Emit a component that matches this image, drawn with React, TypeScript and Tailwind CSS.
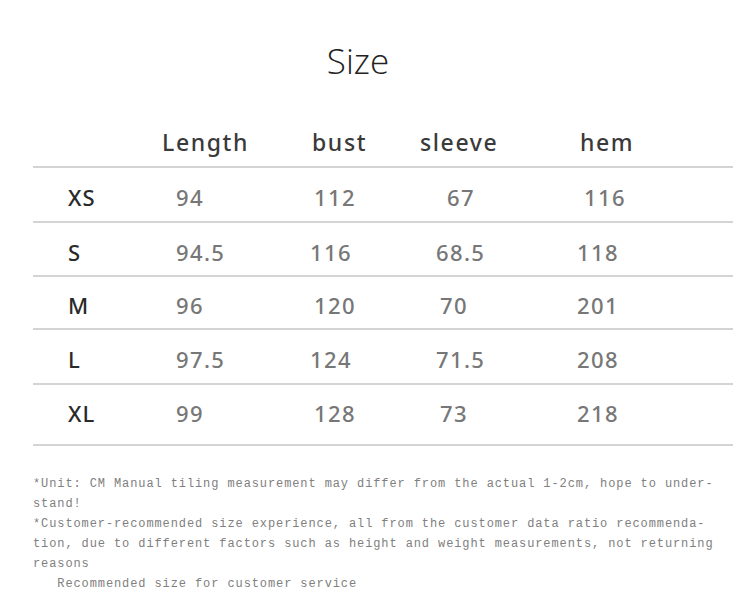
const rows = [
  { size: "XS", cells: [["94", ""], ["112", "pl-[4px]"], ["67", "pl-[11px]"], ["116", "pl-[7px]"]], h: "h-[55px] pt-[6px]" },
  { size: "S", cells: [["94.5", ""], ["116", ""], ["68.5", ""], ["118", ""]], h: "h-[54px] pt-[6px]" },
  { size: "M", cells: [["96", ""], ["120", "pl-[4px]"], ["70", "pl-[4px]"], ["201", "pl-[-1px]"]], h: "h-[53px] pt-[6px]" },
  { size: "L", cells: [["97.5", ""], ["124", ""], ["71.5", ""], ["208", ""]], h: "h-[55px] pt-[6px]" },
  { size: "XL", cells: [["99", ""], ["128", "pl-[4px]"], ["73", "pl-[4px]"], ["218", ""]], h: "h-[61px] pb-[2px]" },
];

const colWidths = ["w-[143px]", "w-[134px]", "w-[126px]", "w-[141px]"];

export default function App() {
  return (
    <div className="h-[607px] w-[750px] overflow-hidden bg-white">
      <h1 className="pt-[41px] pr-[34px] text-center font-['Open_Sans','Noto_Sans',sans-serif] text-[35px] leading-[40px] font-light text-[#222]">
        Size
      </h1>

      <div className="mx-[33px] mt-[29px] w-[700px] font-['Noto_Sans','Open_Sans',sans-serif]">
        <div className="flex h-[56px] items-center pt-[8px] text-[23px] font-medium tracking-[1.6px] text-[#3a3a3a]">
          <div className="w-[129px]" />
          <div className="w-[150px]">Length</div>
          <div className="w-[108px]">bust</div>
          <div className="w-[160px]">sleeve</div>
          <div>hem</div>
        </div>

        {rows.map((row) => (
          <div key={row.size} className={`flex items-center border-t-2 border-[#d4d4d4] ${row.h}`}>
            <div className={`${colWidths[0]} pl-[35px] text-[22px] font-medium tracking-[1px] text-[#2a2a2a]`}>{row.size}</div>
            {row.cells.map(([value, offset], i) => (
              <div
                key={i}
                className={`${i < 3 ? colWidths[i + 1] : "flex-1"} ${offset} text-[22px] font-medium tracking-[1.4px] text-[#777]`}
              >
                {value}
              </div>
            ))}
          </div>
        ))}
        <div className="border-t-2 border-[#d4d4d4]" />
      </div>

      <div className="mx-[33px] mt-[28px] font-['Liberation_Mono',monospace] text-[12px] leading-[20px] tracking-[0.9px] whitespace-pre text-[#808080]">
        <p>*Unit: CM Manual tiling measurement may differ from the actual 1-2cm, hope to under-</p>
        <p>stand!</p>
        <p>*Customer-recommended size experience, all from the customer data ratio recommenda-</p>
        <p>tion, due to different factors such as height and weight measurements, not returning</p>
        <p>reasons</p>
        <p>   Recommended size for customer service</p>
      </div>
    </div>
  );
}
